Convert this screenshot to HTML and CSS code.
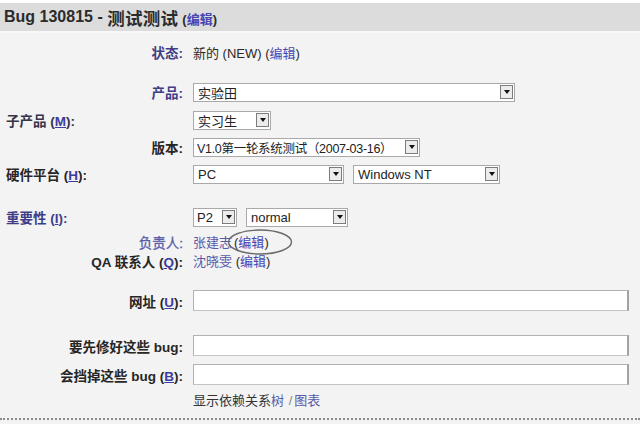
FILE: index.html
```html
<!DOCTYPE html>
<html lang="zh-CN">
<head>
<meta charset="utf-8">
<title>Bug 130815</title>
<link rel="stylesheet" href="styles.css">
</head>
<body>
<div class="page">
  <div class="header">
    <span class="h-latin">Bug 130815 - </span><span class="h-cjk">测试测试</span>
    <span class="h-edit">(<a class="link">编辑</a>)</span>
  </div>
  <div class="form">
    <div class="row r-status">
      <div class="lbl right blue">状态:</div>
      <div class="fld text">新的 (NEW) (<a class="link">编辑</a>)</div>
    </div>
    <div class="row r-product">
      <div class="lbl right blue">产品:</div>
      <div class="fld"><div class="sel w-product"><span class="txt">实验田</span><span class="arrow"></span></div></div>
    </div>
    <div class="row r-sub">
      <div class="lbl left dk">子产品 (<u class="ak">M</u>):</div>
      <div class="fld"><div class="sel w-sub"><span class="txt">实习生</span><span class="arrow"></span></div></div>
    </div>
    <div class="row r-ver">
      <div class="lbl right">版本:</div>
      <div class="fld"><div class="sel w-ver"><span class="txt tight">V1.0第一轮系统测试（2007-03-16）</span><span class="arrow"></span></div></div>
    </div>
    <div class="row r-plat">
      <div class="lbl left">硬件平台 (<u class="ak">H</u>):</div>
      <div class="fld pair">
        <div class="sel w-pc"><span class="txt">PC</span><span class="arrow"></span></div>
        <div class="sel w-os"><span class="txt">Windows NT</span><span class="arrow"></span></div>
      </div>
    </div>
    <div class="row r-imp">
      <div class="lbl left blue">重要性 (<u class="ak">I</u>):</div>
      <div class="fld pair">
        <div class="sel w-p2"><span class="txt">P2</span><span class="arrow"></span></div>
        <div class="sel w-sev"><span class="txt">normal</span><span class="arrow"></span></div>
      </div>
    </div>
    <div class="row r-small r-assign">
      <div class="lbl right lightblue">负责人:</div>
      <div class="fld text"><a class="person">张建志</a><span class="circled">(<a class="link">编辑</a>)<svg class="ellipse" width="66" height="28" viewBox="0 0 66 28"><ellipse cx="33" cy="14" rx="31.5" ry="12" fill="none" stroke="#6a6a6a" stroke-width="1.4"/></svg></span></div>
    </div>
    <div class="row r-small r-qa">
      <div class="lbl right">QA 联系人 (<u class="ak">Q</u>):</div>
      <div class="fld text"><a class="person">沈晓雯</a> (<a class="link">编辑</a>)</div>
    </div>
    <div class="row r-url">
      <div class="lbl right">网址 (<u class="ak">U</u>):</div>
      <div class="fld"><div class="inp"></div></div>
    </div>
    <div class="row r-dep">
      <div class="lbl right">要先修好这些 bug:</div>
      <div class="fld"><div class="inp"></div></div>
    </div>
    <div class="row r-blk">
      <div class="lbl right">会挡掉这些 bug (<u class="ak">B</u>):</div>
      <div class="fld"><div class="inp"></div></div>
    </div>
    <div class="row r-show">
      <div class="lbl"></div>
      <div class="fld text plain">显示依赖关系<a class="link2">树</a> <span class="slash">/</span><a class="link2">图表</a></div>
    </div>
  </div>
  <div class="dotted"></div>
</div>
</body>
</html>
```

FILE: styles.css
```css
html, body {
  margin: 0;
  padding: 0;
  background: #f3f3f3;
}
body {
  width: 640px;
  height: 424px;
  overflow: hidden;
  font-family: "Liberation Sans", "Noto Sans CJK SC", sans-serif;
  font-size: 13px;
  color: #2a2a2a;
}
.page {
  padding-top: 3px;
  background: linear-gradient(#ffffff 0, #ffffff 3px, transparent 3px);
}
.header {
  height: 28px;
  background: #dcdcdc;
  display: flex;
  align-items: center;
  padding-left: 4px;
  font-weight: bold;
  color: #2b2b2b;
  border-bottom: 2px solid #f8f8f8;
}
.h-latin {
  font-size: 16px;
  white-space: pre;
}
.h-cjk {
  font-size: 17.5px;
  letter-spacing: 0.3px;
}
.h-edit {
  font-size: 13px;
  margin-left: 4px;
  padding-top: 2px;
}
.link {
  color: #4646b4;
  text-decoration: none;
}
.link2 {
  color: #5a5aa8;
  text-decoration: none;
}
.person {
  color: #5a5aa8;
  text-decoration: none;
}
.form {
  display: flex;
  flex-direction: column;
}
.row {
  display: grid;
  grid-template-columns: 183px 1fr;
  column-gap: 10px;
  height: 22px;
  align-items: center;
}
.lbl {
  font-weight: bold;
  font-size: 13.5px;
  white-space: nowrap;
  color: #262626;
}
.lbl.right { text-align: right; }
.lbl.left { text-align: left; padding-left: 6px; }
.lbl.blue { color: #3e3e86; }
.lbl.dk { color: #34344a; }
.lbl.lightblue { color: #5a5aa8; font-weight: normal; -webkit-text-stroke: 0.3px #5a5aa8; }
.ak {
  color: #3c3ca0;
  text-decoration: underline;
}
.fld {
  white-space: nowrap;
  display: flex;
  align-items: center;
}
.fld.text { display: block; }
.fld.pair { gap: 9px; }
.fld.plain { color: #333; }
.slash { color: #888; margin: 0 2px 0 1px; }

.r-status { margin-top: 8px; }
.r-product { margin-top: 18px; }
.r-sub { margin-top: 6px; }
.r-ver { margin-top: 5px; }
.r-plat { margin-top: 5px; }
.r-imp { margin-top: 21px; }
.r-small { height: 19px; }
.r-assign { margin-top: 3.5px; }
.r-url { margin-top: 20px; }
.r-dep { margin-top: 23px; }
.r-blk { margin-top: 7px; }
.r-show { margin-top: 3px; }

.sel {
  box-sizing: border-box;
  height: 19px;
  border: 1px solid #a9a9a9;
  background: #fff;
  display: flex;
  align-items: center;
  padding-left: 4px;
  color: #222;
}
.sel .txt {
  flex: 1;
  white-space: nowrap;
  overflow: hidden;
}
.sel .txt.tight {
  font-size: 12.5px;
  letter-spacing: -0.3px;
}
.arrow {
  box-sizing: border-box;
  flex: none;
  width: 13px;
  height: 14px;
  margin-right: 1px;
  border: 1px solid #7c7c7c;
  background: #ececec;
  display: flex;
  align-items: center;
  justify-content: center;
}
.arrow::after {
  content: "";
  width: 0;
  height: 0;
  border-left: 3.5px solid transparent;
  border-right: 3.5px solid transparent;
  border-top: 4px solid #111;
}
.w-product { width: 322px; }
.w-sub { width: 78px; }
.w-ver { width: 227px; padding-left: 3px; }
.w-pc { width: 151px; }
.w-os { width: 147px; }
.w-p2 { width: 44px; padding-left: 3px; }
.w-sev { width: 102px; }

.circled {
  position: relative;
  margin-left: 2px;
}
.ellipse {
  position: absolute;
  left: -7px;
  top: -7px;
}
.inp {
  box-sizing: border-box;
  width: 436px;
  height: 21px;
  background: #fff;
  border: 1px solid #b2b2b2;
  border-right: 2px solid #a2a2a2;
  border-bottom: 1px solid #c4c4c4;
}
.dotted {
  margin-top: 7px;
  border-top: 2px dotted #8a8a8a;
}
```
